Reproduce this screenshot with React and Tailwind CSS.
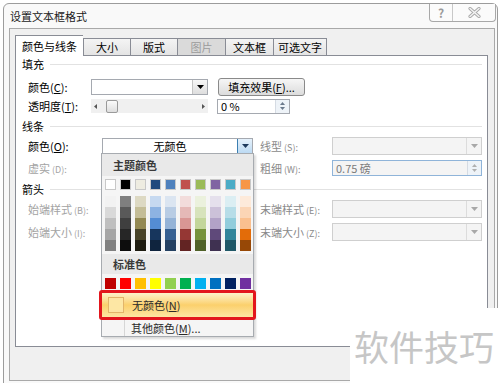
import React from 'react';

const THEME_TOP = ['#FFFFFF', '#000000', '#EEECE1', '#1F497D', '#4F81BD', '#C0504D', '#9BBB59', '#8064A2', '#4BACC6', '#F79646'];
const THEME_SHADES = [
  ['#F2F2F2', '#D9D9D9', '#BFBFBF', '#A6A6A6', '#808080'],
  ['#7F7F7F', '#595959', '#3F3F3F', '#262626', '#0D0D0D'],
  ['#DDD9C3', '#C4BD97', '#938953', '#494429', '#1D1B10'],
  ['#C6D9F0', '#8DB3E2', '#548DD4', '#17365D', '#0F243E'],
  ['#DBE5F1', '#B8CCE4', '#95B3D7', '#366092', '#244061'],
  ['#F2DCDB', '#E5B9B7', '#D99694', '#953734', '#632423'],
  ['#EBF1DD', '#D7E3BC', '#C3D69B', '#76923C', '#4F6128'],
  ['#E5E0EC', '#CCC1D9', '#B2A2C7', '#5F497A', '#3F3151'],
  ['#DBEEF3', '#B7DDE8', '#92CDDC', '#31859B', '#205867'],
  ['#FDEADA', '#FBD5B5', '#FAC08F', '#E36C09', '#974806'],
];
const STANDARD = ['#C00000', '#FF0000', '#FFC000', '#FFFF00', '#92D050', '#00B050', '#00B0F0', '#0070C0', '#002060', '#7030A0'];

const TABS = [
  { label: '颜色与线条', w: 'w-[68px]', active: true },
  { label: '大小', w: 'w-[47px]' },
  { label: '版式', w: 'w-[47px]' },
  { label: '图片', w: 'w-[48px]', disabled: true },
  { label: '文本框', w: 'w-[48px]' },
  { label: '可选文字', w: 'w-[54px]', last: true },
];

const Down = ({ color = '#000' }) => (
  <svg width="7" height="4" viewBox="0 0 7 4"><path d="M0 0h7L3.5 4z" fill={color} /></svg>
);

const Spin = ({ color = '#6b7a8c' }) => (
  <div className="flex flex-col items-center justify-center gap-[2px] w-[14px] h-full border-l border-[#d5dbe3] bg-[#eef3f8]">
    <svg width="5" height="3" viewBox="0 0 5 3"><path d="M0 3h5L2.5 0z" fill={color} /></svg>
    <svg width="5" height="3" viewBox="0 0 5 3"><path d="M0 0h5L2.5 3z" fill={color} /></svg>
  </div>
);

function Dropdown({ className, disabled, active, children }) {
  const box = disabled ? 'border-[#cfcfcf] bg-[#f4f4f4]' : 'border-[#a5a9b0] bg-white';
  const btn = active
    ? 'border-l border-[#3c7fb1] bg-gradient-to-b from-[#e5f1fb] to-[#bcdaf3]'
    : disabled
      ? 'border-l border-[#dcdcdc] bg-[#f4f4f4]'
      : 'border-l border-[#c4c4c4] bg-gradient-to-b from-[#f7f7f7] to-[#dedede]';
  return (
    <div className={`flex border ${box} ${className}`}>
      <div className="flex-1 flex items-center justify-center overflow-hidden">{children}</div>
      <div className={`w-[15px] flex items-center justify-center ${btn}`}>
        <Down color={disabled ? '#a8a8a8' : active ? '#1d3a5c' : '#000'} />
      </div>
    </div>
  );
}

const Key = ({ k }) => (
  <span>(<span className="underline">{k}</span>):</span>
);

function SectionHeader({ label }) {
  return (
    <div className="flex items-center h-[16px]">
      <span>{label}</span>
      <div className="ml-[6px] h-px flex-1 bg-[#e2e2e2]" />
    </div>
  );
}

export default function App() {
  return (
    <div className="relative w-[500px] h-[383px] overflow-hidden bg-white pl-[3px] pt-[3px] text-[11px] leading-none text-black font-['Noto_Sans_CJK_SC',sans-serif]">
      {/* Window */}
      <div className="w-[495px] h-[400px] border border-[#9c9c9c] rounded-t-[6px] bg-[#f9f9f9]">
        {/* Title bar */}
        <div className="flex justify-between h-[24px]">
          <div className="pl-[6px] pt-[7px] text-[11px] text-[#1a1a1a]">设置文本框格式</div>
          <div className="flex h-[18px] mr-[1px] border-x border-b border-[#a8a8a8] rounded-b-[4px] bg-[#fbfbfb]">
            <div className="w-[23px] flex items-center justify-center border-r border-[#c8c8c8] text-[12px] font-bold text-[#9a9a9a]">?</div>
            <div className="w-[42px] flex items-center justify-center">
              <svg width="13" height="11" viewBox="0 0 13 11">
                <path d="M2 1.5l9 8M11 1.5l-9 8" stroke="#a9a9a9" strokeWidth="3.2" strokeLinecap="round" />
                <path d="M2 1.5l9 8M11 1.5l-9 8" stroke="#f4f4f4" strokeWidth="1.4" strokeLinecap="round" />
              </svg>
            </div>
          </div>
        </div>

        {/* Client area */}
        <div className="ml-[5px] w-[486px] h-[353px] border border-[#a9a9a9] bg-[#f0f0f0] pl-[5px] pt-[6px]">
          {/* Tabs */}
          <div className="flex items-end h-[20px]">
            {TABS.map((t) => (
              <div
                key={t.label}
                className={`${t.w} flex items-center justify-center border-t border-l border-[#898c95] ${t.last ? 'border-r' : ''} ${
                  t.active
                    ? 'relative z-10 h-[21px] -mb-px bg-white'
                    : t.disabled
                      ? 'h-[17px] bg-[#dadada] text-[#9a9a9a]'
                      : 'h-[17px] bg-gradient-to-b from-[#f4f4f4] to-[#e4e4e4]'
                }`}
              >
                {t.label}
              </div>
            ))}
          </div>

          {/* Tab panel */}
          <div className="w-[473px] h-[292px] border border-[#898c95] bg-white pl-[6px] pr-[5px]">
            <SectionHeader label="填充" />

            <div className="flex items-center h-[18px] mt-[6px] pl-[6px]">
              <div className="w-[63px]">颜色<Key k="C" /></div>
              <Dropdown className="w-[117px] h-[16px]" />
              <div className="ml-[10px] w-[87px] h-[18px] flex items-center justify-center rounded-[3px] border border-[#8a8a8a] bg-gradient-to-b from-[#f6f6f6] to-[#dcdcdc]">
                填充效果<span>(<span className="underline">F</span>)...</span>
              </div>
            </div>

            <div className="flex items-center h-[14px] mt-[3px] pl-[6px]">
              <div className="w-[63px]">透明度<Key k="T" /></div>
              <div className="w-[117px] h-[14px] flex items-center bg-[#f0f0f0] px-[3px]">
                <svg width="3" height="5" viewBox="0 0 3 5"><path d="M3 0v5L0 2.5z" fill="#555" /></svg>
                <div className="ml-[9px] w-[12px] h-[13px] border border-[#9a9a9a] rounded-[2px] bg-gradient-to-b from-[#fbfbfb] to-[#dedede]" />
                <div className="flex-1" />
                <svg width="3" height="5" viewBox="0 0 3 5"><path d="M0 0v5L3 2.5z" fill="#555" /></svg>
              </div>
              <div className="ml-[9px] w-[73px] h-[15px] flex border border-[#a5a9b0] bg-white">
                <div className="flex-1 flex items-center pl-[3px]">0 %</div>
                <Spin />
              </div>
            </div>

            <div className="mt-[5px]"><SectionHeader label="线条" /></div>

            <div className="flex items-center h-[18px] mt-[3px] pl-[6px]">
              <div className="w-[74px]">颜色<Key k="O" /></div>
              <Dropdown active className="w-[151px] h-[16px]">无颜色</Dropdown>
              <div className="ml-[7px] w-[72px] text-[#8a8a8a]">线型<span className="text-[9px]"> (S):</span></div>
              <Dropdown disabled className="w-[150px] h-[18px]" />
            </div>

            <div className="flex items-center h-[16px] mt-[5px] pl-[6px]">
              <div className="w-[74px] text-[#a3a3a3]">虚实<span className="text-[9px]"> (D):</span></div>
              <Dropdown disabled className="w-[151px] h-[16px]" />
              <div className="ml-[7px] w-[72px] text-[#8a8a8a]">粗细<span className="text-[9px]"> (W):</span></div>
              <div className="w-[150px] h-[16px] flex border border-[#8fb4d9] bg-[#f4f4f4]">
                <div className="flex-1 flex items-center pl-[3px] text-[#7a7a7a]">0.75 磅</div>
                <Spin color="#b0b0b0" />
              </div>
            </div>

            <div className="mt-[5px]"><SectionHeader label="箭头" /></div>

            <div className="flex items-center h-[18px] mt-[3px] pl-[6px]">
              <div className="w-[74px] text-[#a3a3a3]">始端样式<span className="text-[9px]"> (B):</span></div>
              <Dropdown disabled className="w-[151px] h-[16px]" />
              <div className="ml-[7px] w-[72px] text-[#8a8a8a]">末端样式<span className="text-[9px]"> (E):</span></div>
              <Dropdown disabled className="w-[150px] h-[18px]" />
            </div>

            <div className="flex items-center h-[18px] mt-[5px] pl-[6px]">
              <div className="w-[74px] text-[#a3a3a3]">始端大小<span className="text-[9px]"> (I):</span></div>
              <Dropdown disabled className="w-[151px] h-[16px]" />
              <div className="ml-[7px] w-[72px] text-[#8a8a8a]">末端大小<span className="text-[9px]"> (Z):</span></div>
              <Dropdown disabled className="w-[150px] h-[18px]" />
            </div>
          </div>
        </div>
      </div>

      {/* Colour picker popup */}
      <div className="absolute left-[101px] top-[153px] w-[153px] h-[184px] border border-[#a7abb0] bg-[#f5f5f5] shadow-[2px_2px_2px_rgba(0,0,0,0.15)] flex flex-col">
        <div className="h-[22px] flex items-center pl-[11px] bg-[#e9e9e9] font-semibold text-[#3a3a3a]">主题颜色</div>
        <div className="flex gap-[4px] pl-[3px] mt-[3px]">
          {THEME_TOP.map((c) => (
            <div key={c} className="w-[11px] h-[11px] border border-[#c8c8c8]" style={{ backgroundColor: c }} />
          ))}
        </div>
        <div className="flex gap-[4px] pl-[3px] mt-[6px]">
          {THEME_SHADES.map((col, i) => (
            <div key={i} className="flex flex-col w-[11px]">
              {col.map((c) => (
                <div key={c} className="h-[11px]" style={{ backgroundColor: c }} />
              ))}
            </div>
          ))}
        </div>
        <div className="mt-[3px] h-[20px] flex items-center pl-[11px] bg-[#e9e9e9] font-semibold text-[#3a3a3a]">标准色</div>
        <div className="flex gap-[4px] pl-[3px] mt-[4px]">
          {STANDARD.map((c) => (
            <div key={c} className="w-[11px] h-[11px]" style={{ backgroundColor: c }} />
          ))}
        </div>
        <div className="relative z-10 -mx-[3px] mt-[1px] h-[30px] rounded-[3px] border-[3px] border-[#e3161d] bg-gradient-to-b from-[#fdf3c9] via-[#fbd06c] to-[#fde6a2] flex items-center pl-[6px]">
          <div className="w-[16px] h-[16px] border border-[#e2b56a] bg-[#fde7a4]" />
          <span className="ml-[8px] text-[#2a2a2a]">无颜色<span>(<span className="underline">N</span>)</span></span>
        </div>
        <div className="flex-1 flex">
          <div className="w-[23px] border-r border-[#d6d6d6]" />
          <div className="flex items-center pl-[6px] text-[#2a2a2a]">其他颜色<span>(<span className="underline">M</span>)...</span></div>
        </div>
      </div>

      {/* Watermark */}
      <div className="absolute left-[350px] top-[308px] w-[150px] h-[75px] bg-white flex items-center pl-[4px]">
        <span className="text-[35px] leading-none text-[#c6c6c6] font-['Noto_Sans_CJK_SC',sans-serif]">软件技巧</span>
      </div>
    </div>
  );
}
